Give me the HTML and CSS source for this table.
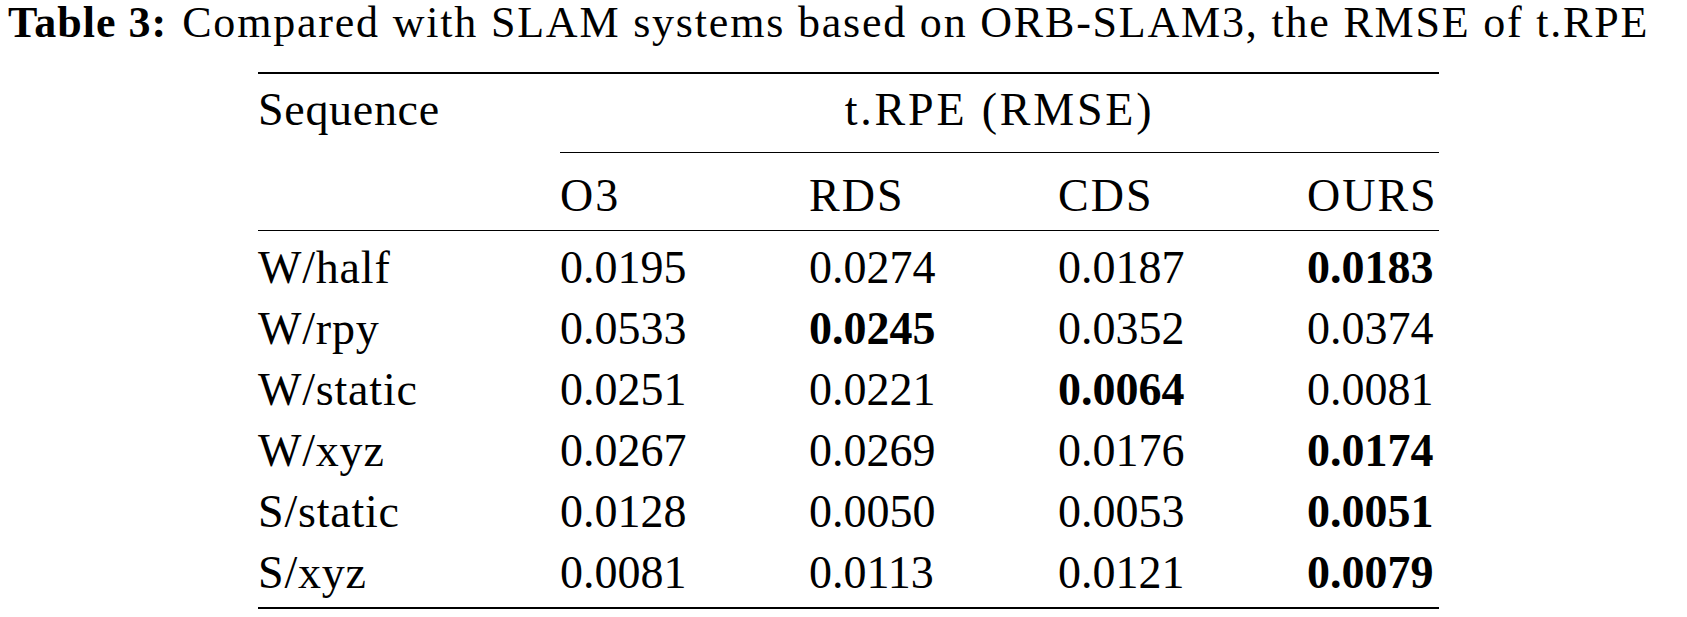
FILE: index.html
```html
<!DOCTYPE html>
<html lang="en">
<head>
  <meta charset="UTF-8">
  <title>Table 3</title>
  <link rel="stylesheet" href="styles.css">
</head>
<body>
  <div class="caption">
    <span class="caption-label">Table 3:</span>Compared with SLAM systems based on ORB-SLAM3, the RMSE of t.RPE
  </div>

  <table class="results">
    <colgroup>
      <col class="col-seq">
      <col class="col-val">
      <col class="col-val">
      <col class="col-val">
      <col class="col-last">
    </colgroup>
    <thead>
      <tr class="head-top">
        <th class="label">Sequence</th>
        <th colspan="4" class="group">t.RPE (RMSE)</th>
      </tr>
      <tr class="head-sub">
        <th></th>
        <th>O3</th>
        <th>RDS</th>
        <th>CDS</th>
        <th>OURS</th>
      </tr>
    </thead>
    <tbody>
      <tr>
        <td class="label">W/half</td><td>0.0195</td><td>0.0274</td><td>0.0187</td><td class="best">0.0183</td>
      </tr>
      <tr>
        <td class="label">W/rpy</td><td>0.0533</td><td class="best">0.0245</td><td>0.0352</td><td>0.0374</td>
      </tr>
      <tr>
        <td class="label">W/static</td><td>0.0251</td><td>0.0221</td><td class="best">0.0064</td><td>0.0081</td>
      </tr>
      <tr>
        <td class="label">W/xyz</td><td>0.0267</td><td>0.0269</td><td>0.0176</td><td class="best">0.0174</td>
      </tr>
      <tr>
        <td class="label">S/static</td><td>0.0128</td><td>0.0050</td><td>0.0053</td><td class="best">0.0051</td>
      </tr>
      <tr>
        <td class="label">S/xyz</td><td>0.0081</td><td>0.0113</td><td>0.0121</td><td class="best">0.0079</td>
      </tr>
    </tbody>
  </table>
</body>
</html>
```

FILE: styles.css
```css
body {
  margin: 0;
  padding: 0;
  background: #fff;
  color: #000;
  font-family: "Liberation Serif", "Times New Roman", serif;
}

/* caption line above the table */
.caption {
  padding: 0 0 0 8px;
  font-size: 44px;
  line-height: 46px;
  letter-spacing: 1.8px;
  white-space: nowrap;
}

.caption-label {
  font-weight: bold;
  letter-spacing: 1px;
  margin-right: 15px;
}

/* booktabs-like table */
.results {
  margin: 26px 0 0 258px;
  width: 1181px;
  table-layout: fixed;
  border-collapse: separate;
  border-spacing: 0;
  font-size: 46px;
}

.col-seq {
  width: 302px;
}

.col-val {
  width: 249px;
}

.col-last {
  width: 132px;
}

.results th,
.results td {
  padding: 0;
  text-align: left;
  vertical-align: top;
  font-weight: normal;
  line-height: 61px;
  white-space: nowrap;
}

.results th {
  letter-spacing: 2px;
}

.results th.label {
  letter-spacing: 0.7px;
}

.results td.label {
  letter-spacing: 0.8px;
}

.head-top th {
  border-top: 2.5px solid #000;
  padding-top: 4.5px;
  padding-bottom: 12px;
}

.head-top .group {
  text-align: center;
  letter-spacing: 2.8px;
  border-bottom: 1.5px solid #000;
}

.head-sub th {
  padding-top: 12.2px;
  padding-bottom: 4.8px;
  border-bottom: 1.5px solid #000;
}

.results tbody tr:first-child td {
  padding-top: 6px;
}

.results tbody tr:last-child td {
  padding-bottom: 3.5px;
  border-bottom: 2.5px solid #000;
}

.results td.best {
  font-weight: bold;
}
```
